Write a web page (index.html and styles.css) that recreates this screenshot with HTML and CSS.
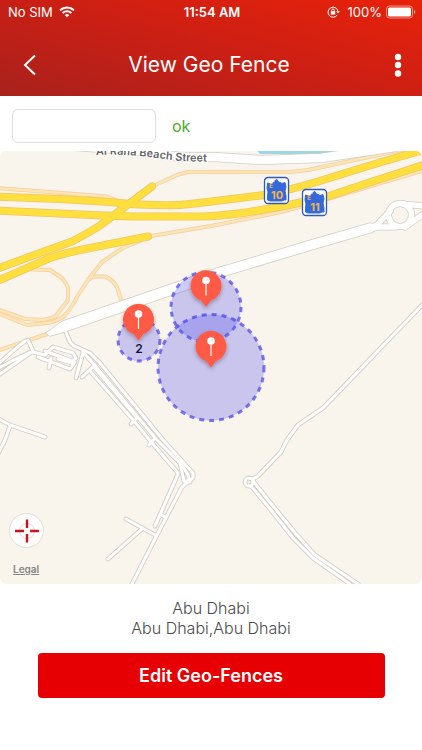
FILE: index.html
```html
<!DOCTYPE html>
<html lang="en">
<head>
<meta charset="utf-8">
<meta name="viewport" content="width=device-width, initial-scale=1">
<title>View Geo Fence</title>
<link rel="stylesheet" href="styles.css">
</head>
<body>
<header class="header">
  <div class="status">
    <div class="status-side">
      <span>No SIM</span>
      <svg class="wifi" width="16" height="12" viewBox="0 0 16 12" fill="none" stroke="#fff" stroke-width="2" aria-hidden="true">
        <path d="M1 4.2a10.2 10.2 0 0 1 14 0M3.6 7a6.4 6.4 0 0 1 8.8 0"/>
        <path d="M5.7 9.1a3.4 3.4 0 0 1 4.6 0L8 11.4z" fill="#fff" stroke="none"/>
      </svg>
    </div>
    <span class="clock">11:54 AM</span>
    <div class="status-side status-right">
      <svg class="lock" width="13" height="12" viewBox="0 0 13 12" fill="none" stroke="#fff" aria-hidden="true">
        <path d="M10.2 9A5 5 0 1 1 11 5.500"/>
        <path d="M9.200 5.200h3.600L11 7.600z" fill="#fff" stroke="none"/>
        <rect x="3.800" y="5.200" width="4.400" height="3.400" fill="#fff" stroke="none"/>
        <path d="M4.700 5.500V4.300a1.300 1.300 0 0 1 2.600 0v1.200"/>
      </svg>
      <span>100%</span>
      <svg width="30" height="14" viewBox="0 0 30 14" aria-hidden="true">
        <rect x=".5" y="1" width="26" height="12" rx="3" fill="none" stroke="#fff" stroke-opacity=".5"/>
        <rect x="2" y="2.500" width="23" height="9" rx="1.500" fill="#fff"/>
        <path d="M28 5a2.200 2.200 0 0 1 0 4z" fill="#fff" fill-opacity=".6"/>
      </svg>
    </div>
  </div>
  <div class="navbar">
    <button class="icon-button" type="button" aria-label="Back">
      <svg width="14" height="22" viewBox="0 0 14 22" fill="none" stroke="#fff" stroke-width="2"><path d="M12 1.500L2 11l10 9.500"/></svg>
    </button>
    <h1 class="title">View Geo Fence</h1>
    <button class="icon-button menu-button" type="button" aria-label="More options">
      <svg width="8" height="24" viewBox="0 0 8 24" fill="#fff"><circle cx="4" cy="4" r="3.200"/><circle cx="4" cy="12" r="3.200"/><circle cx="4" cy="20.500" r="3.200"/></svg>
    </button>
  </div>
</header>
<main>
  <form class="search">
    <input class="search-input" type="text" aria-label="Geo fence name">
    <button class="search-ok" type="button">ok</button>
  </form>
  <section class="map" aria-label="Map">
    <svg class="map-canvas" viewBox="0 151 422 433">
      <defs>
        <g id="highways">
          <path d="M-5 196.500L60 199L110 202Q135 205 157 205Q175 206 190 204L211 201.500L264 195Q290 190 318 181.500L378 163L430 148"/>
          <path d="M-5 210.500L103 215.500L133 216.500H205Q235 215 261 210L289 205L326 197L371 182L430 163"/>
          <path d="M-5 269.500L40 253L72 241.500Q90 232 100 225.500L152 186.500"/>
          <path d="M-5 282L50 258Q65 253 80 250L148 236.500"/>
        </g>
        <g id="ramps">
          <path d="M-3 188L107 196.500L116 200M152 186.500L177 175L188 172H290L308 170L388 153L430 144"/>
          <path d="M148 236.500L211 226L281 212L321 201L371 186L425 170"/>
          <path d="M140 241L123 248L102 262L88 280L78 295Q72 308 63 317Q55 322 47 323L27 325L-3 313"/>
          <path d="M33 269.500L50 270L62 278Q67 284 68 288V300L55 317L43 320L25 319L-3 309"/>
          <path d="M88 280Q91 277 96 276.500H105Q112 279 117 287L122 303"/>
          <path d="M-3 351L47 334"/>
        </g>
        <g id="streets">
          <path d="M65 330L70 342L74 346L90 353L100 363L163 440L193 473V478L189 481L184 481"/>
          <path d="M83 352L97 368L157 440L180 463L184 481"/>
          <path d="M90 371L134 421L152 443L178 473"/>
          <path d="M94 367L137 418L131 424M82 377L95 365M83 353L76 378M149 445L154 439"/>
          <path d="M180 462L188 475L190 482"/>
          <path d="M28 340L33 351L0 374M25 341L13 351L-3 365M33 351L14 360L-3 369"/>
          <path d="M33 352L45 355L53 347L73 353L76 358L72 361L45 351M38 357L70 369L75 362M58 359L72 363M51 358L49 368"/>
          <path d="M-3 418L10 425L45 437M10 426L5 440L-3 456"/>
          <path d="M188 482L182 487L157 535L131 586M178 474L155 526M160 514L165 517M126 519L155 535M143 528L108 559"/>
          <path d="M425 302L323 408L298 425L287 440L281 452L258 476L253 479"/>
          <circle cx="249" cy="482" r="4"/>
          <path d="M253 481L273 506L296 534L315 555L358 584M251 486L271 510L293 538L313 558L350 584"/>
        </g>
        <g id="pin">
          <path d="M-5-6.500A15.500 15.500 0 1 1 5-6.500L0 0z" fill="#ff5a45"/>
          <path d="M0-26V-11.500" stroke="#fff" stroke-width="1.200"/>
          <circle cy="-26.500" r="3.800" fill="#fff"/>
          <circle cx="1" cy="-27.500" r="1" fill="#ffd5ce"/>
        </g>
        <g id="shield">
          <rect x=".5" y=".5" width="24" height="26" rx="3.500" fill="#fff" stroke="#3159b8" stroke-width="1.300"/>
          <path d="M3.500 6L8 7.500L9.500 5L11 5.500V3.500L13 2.500L14.500 5L17 5.500L16.500 7L21 5.500L22 10L21 14L22 19V23H20L18 24H6L3.500 23V19L4 15L3 11z" fill="#3568d8" stroke="#3568d8"/>
        </g>
        <path id="street-name" d="M96 155L112 154.500Q140 155.500 157 158Q175 161 190 161.500L230 162"/>
        <filter id="shadow" x="-40%" y="-20%" width="180%" height="160%"><feDropShadow dx="0" dy="2" stdDeviation="2" flood-opacity=".3"/></filter>
      </defs>
      <rect y="151" width="422" height="433" fill="#f9f4ec"/>
      <path d="M256 149H346L325 154H260z" fill="#9bd6e4"/>
      <g class="roads">
        <use href="#ramps" stroke="#f2cfa0" stroke-width="4"/>
        <use href="#ramps" stroke="#fde4b5" stroke-width="2.600"/>
        <use href="#streets" stroke="#d2cdc7" stroke-width="4.800"/>
        <g stroke="#d2cdc7">
          <path d="M75 146L140 151L180 157H215L261 160L321 158L395 147" stroke-width="10"/>
          <path d="M46 333L62 321.500L224 266L224 277L64 332L50 336z" stroke-width="1.500"/>
          <path d="M218 273L311 245L370 228" stroke-width="11"/>
          <path d="M360 231L377 225L390 211M360 231L378 227L396 227M403 204L425 206M405 227L425 213" stroke-width="7"/>
          <circle cx="400" cy="215" r="11.500" stroke-width="7"/>
        </g>
        <use href="#streets" stroke="#fff" stroke-width="3"/>
        <g stroke="#fff">
          <path d="M75 146L140 151L180 157H215L261 160L321 158L395 147" stroke-width="8.500"/>
          <path d="M46 333L62 321.500L224 266L224 277L64 332L50 336z" fill="#fff" stroke="none"/>
          <path d="M218 273L311 245L370 228" stroke-width="9.500"/>
          <path d="M360 231L377 225L390 211M360 231L378 227L396 227M403 204L425 206M405 227L425 213" stroke-width="5.500"/>
          <circle cx="400" cy="215" r="11.500" stroke-width="5.500"/>
        </g>
        <use href="#highways" stroke="#efc568" stroke-width="8"/>
        <use href="#highways" stroke="#ffdf3d" stroke-width="6.500"/>
      </g>
      <text class="street-label"><textPath href="#street-name">Al Rana Beach Street</textPath></text>
      <use href="#shield" x="264" y="177"/>
      <use href="#shield" x="302" y="189"/>
      <g class="shield-text">
        <text x="277" y="199">10</text><text x="315" y="211">11</text>
        <text class="shield-letter" x="271" y="188">E</text><text class="shield-letter" x="309" y="200">E</text>
      </g>
      <g class="fences">
        <circle cx="206" cy="307" r="35"/>
        <circle cx="139" cy="340" r="21"/>
        <circle cx="211" cy="367.500" r="53"/>
      </g>
      <g filter="url(#shadow)">
        <use href="#pin" x="206" y="307"/>
        <use href="#pin" x="138.500" y="340.500"/>
        <use href="#pin" x="211" y="367.500"/>
      </g>
      <text class="fence-count" x="139" y="353">2</text>
    </svg>
    <div class="map-tools">
      <button class="locate" type="button" aria-label="Centre map">
        <svg width="26" height="26" viewBox="0 0 26 26" fill="none"><circle cx="13" cy="13" r="7.500" stroke="#ddd"/><path d="M13 1.500v8.500M13 16v8.500M1 13h9M16 13h9" stroke="#cf1020" stroke-width="2.400"/></svg>
      </button>
      <a class="legal" href="#">Legal</a>
    </div>
  </section>
  <p class="address">Abu Dhabi<br>Abu Dhabi,Abu Dhabi</p>
  <button class="edit" type="button">Edit Geo-Fences</button>
</main>
</body>
</html>
```
FILE: styles.css
```css
* { box-sizing: border-box; }
body {
  margin: 0;
  background: #fff;
  font-family: Inter, "Liberation Sans", sans-serif;
}
button, input { font: inherit; }
button { border: 0; padding: 0; background: none; cursor: pointer; }
svg { display: block; }
.header {
  height: 96px;
  color: #fff;
  background: linear-gradient(15deg, #a8211c, #cb1f14 50%, #e8220a);
}
.status {
  display: grid;
  grid-template-columns: 1fr auto 1fr;
  align-items: center;
  height: 24px;
  padding: 0 6px 0 8px;
  font-size: 13px;
}
.status-side { display: flex; align-items: center; gap: 6px; }
.status-right { justify-content: flex-end; gap: 4px; }
.lock { margin-right: 4px; }
.clock { font-weight: 600; }
.navbar {
  display: flex;
  align-items: center;
  justify-content: space-between;
  height: 72px;
  padding: 10px 20px 0 16px;
}
.icon-button {
  display: grid;
  place-items: center;
  width: 28px;
  height: 44px;
  color: #fff;
}
.menu-button { justify-items: end; }
.title { margin: 0; font-size: 21px; font-weight: 400; line-height: 28px; }
.search {
  display: flex;
  align-items: center;
  gap: 16px;
  height: 55px;
  padding: 4px 12px 0;
}
.search-input {
  width: 144px;
  height: 34px;
  padding: 0 8px;
  border: 1px solid #dedede;
  border-radius: 6px;
  background: #fff;
}
.search-ok { color: #4fac2b; font-size: 16px; }
.map {
  position: relative;
  overflow: hidden;
  border-radius: 7px;
}
.map-canvas { width: 100%; height: auto; }
.roads { fill: none; stroke-linecap: round; stroke-linejoin: round; }
.street-label { fill: #666; font-size: 11px; font-weight: 600; stroke: #fff; stroke-width: 2px; paint-order: stroke; }
.shield-text { fill: #f3b64a; font-size: 11px; font-weight: 700; text-anchor: middle; }
.shield-letter { font-size: 6px; }
.fences { fill: rgb(90 90 240 / 30%); stroke: rgb(60 50 235 / 65%); stroke-width: 3px; stroke-dasharray: 5 5; stroke-linecap: butt; }
.fence-count { fill: #14143c; font-size: 12px; font-weight: 600; text-anchor: middle; }
.map-tools {
  position: absolute;
  left: 9px;
  bottom: 8px;
  display: flex;
  flex-direction: column;
  align-items: flex-start;
  gap: 14px;
}
.locate {
  display: grid;
  place-items: center;
  width: 35px;
  height: 35px;
  border: 1px solid #e2ded8;
  border-radius: 50%;
  background: #fff;
}
.legal { margin-left: 4px; color: #858585; font-size: 10px; line-height: 14px; font-weight: 600; }
.address {
  margin: 14px 16px 15px;
  color: #4a4a4a;
  font-size: 16px;
  font-weight: 300;
  line-height: 20px;
  text-align: center;
}
.edit {
  display: block;
  width: calc(100% - 75px);
  height: 45px;
  margin: 0 auto;
  border-radius: 4px;
  color: #fff;
  background: #e60004;
  font-size: 18px;
  font-weight: 600;
}
```
